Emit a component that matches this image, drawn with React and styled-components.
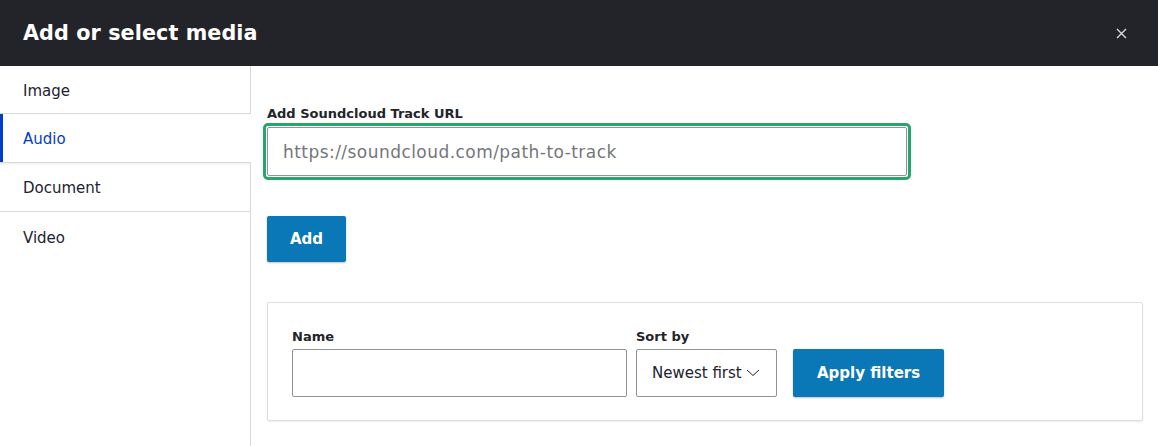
import React from "react";
import styled, { createGlobalStyle } from "styled-components";

const Global = createGlobalStyle`
  html, body { margin: 0; padding: 0; background: #fff; }
  body { font-family: "DejaVu Sans", "Liberation Sans", sans-serif; color: #222330; }
  * { box-sizing: border-box; }
`;

const Dialog = styled.div`
  width: 1158px;
  height: 446px;
  display: flex;
  flex-direction: column;
  overflow: hidden;
`;

const TitleBar = styled.header`
  height: 66px;
  flex: none;
  background: #232429;
  display: flex;
  align-items: center;
  justify-content: space-between;
  padding: 0 30px 0 23px;
`;

const Title = styled.h1`
  margin: 0;
  font-size: 20.7px;
  font-weight: 700;
  color: #fff;
  letter-spacing: 0.1px;
`;

const CloseButton = styled.button`
  border: 0;
  background: transparent;
  padding: 0;
  width: 14px;
  height: 14px;
  display: flex;
  align-items: center;
  justify-content: center;
  cursor: pointer;
`;

const Body = styled.div`
  flex: 1;
  display: flex;
  min-height: 0;
`;

const Sidebar = styled.nav`
  width: 251px;
  flex: none;
  display: flex;
  flex-direction: column;
  position: relative;
  &::after {
    content: "";
    position: absolute;
    top: 195px;
    bottom: 0;
    right: 0;
    width: 1px;
    background: #d8d9de;
  }
`;

const Tab = styled.a`
  height: ${(p) => (p.$first ? 48 : 49)}px;
  display: flex;
  align-items: center;
  padding: 2px 0 0 23px;
  font-size: 15px;
  text-decoration: none;
  color: ${(p) => (p.$active ? "#003ecc" : "#222330")};
  border-bottom: ${(p) => (p.$last ? "0" : "1px solid #d8d9de")};
  border-right: ${(p) => (p.$active ? "1px solid transparent" : "1px solid #d8d9de")};
  box-shadow: ${(p) => (p.$active ? "inset 3px 0 0 #003ecc, 0 2px 2px -1px rgba(0,0,0,0.08)" : "none")};
  position: relative;
  z-index: ${(p) => (p.$active ? 1 : 0)};
  background: #fff;
`;

const Content = styled.main`
  flex: 1;
  padding: 40px 15px 0 16px;
  display: flex;
  flex-direction: column;
`;

const Label = styled.label`
  display: block;
  font-size: 13px;
  font-weight: 700;
  color: #232429;
  margin-bottom: 2px;
`;

const UrlField = styled.div`
  width: 648px;
  margin-left: -4px;
  padding: 1px;
  border: 3px solid #26a769;
  border-radius: 5px;
`;

const TextInput = styled.input`
  display: block;
  width: ${(p) => p.$width || "100%"};
  height: ${(p) => p.$h || 48}px;
  border: 1px solid #8e929c;
  border-radius: 2px;
  padding: 0 15px;
  font-family: inherit;
  font-size: 17px;
  letter-spacing: 0.45px;
  color: #222330;
  background: #fff;
  outline: none;
  &::placeholder { color: #75767b; }
`;

const PrimaryButton = styled.button`
  height: ${(p) => p.$h || 46}px;
  padding: 0 ${(p) => p.$px || 23}px;
  border: 0;
  border-radius: 2px;
  background: #0a78b6;
  color: #fff;
  font-family: inherit;
  font-size: 15px;
  font-weight: 700;
  box-shadow: 0 1px 2px rgba(0, 0, 0, 0.25);
  cursor: pointer;
`;

const AddRow = styled.div`
  margin-top: 36px;
`;

const FilterCard = styled.section`
  margin-top: 40px;
  width: 876px;
  border: 1px solid #dedfe4;
  border-radius: 2px;
  box-shadow: 0 1px 2px rgba(0, 0, 0, 0.08);
  padding: 26px 24px 23px 24px;
  display: flex;
  align-items: flex-end;
  gap: 9px;
  align-self: flex-start;
`;

const FilterItem = styled.div`
  display: flex;
  flex-direction: column;
`;

const FilterLabel = styled(Label)`
  margin-bottom: 5px;
`;

const Select = styled.div`
  width: 141px;
  height: 48px;
  border: 1px solid #8e929c;
  border-radius: 2px;
  display: flex;
  align-items: center;
  padding-left: 15px;
  gap: 4px;
  font-size: 15px;
  color: #222330;
`;

const ButtonSlot = styled.div`
  margin-left: 7px;
`;

export default function App() {
  return (
    <>
      <Global />
      <Dialog>
        <TitleBar>
          <Title>Add or select media</Title>
          <CloseButton aria-label="Close">
            <svg width="11" height="11" viewBox="0 0 11 11">
              <path d="M1 1L10 10M10 1L1 10" stroke="#d8d9de" strokeWidth="1.4" fill="none" />
            </svg>
          </CloseButton>
        </TitleBar>
        <Body>
          <Sidebar>
            <Tab $first>Image</Tab>
            <Tab $active>Audio</Tab>
            <Tab>Document</Tab>
            <Tab $last>Video</Tab>
          </Sidebar>
          <Content>
            <Label>Add Soundcloud Track URL</Label>
            <UrlField>
              <TextInput $h={49} placeholder="https://soundcloud.com/path-to-track" />
            </UrlField>
            <AddRow>
              <PrimaryButton $px={23}>Add</PrimaryButton>
            </AddRow>
            <FilterCard>
              <FilterItem>
                <FilterLabel>Name</FilterLabel>
                <TextInput $width="335px" />
              </FilterItem>
              <FilterItem>
                <FilterLabel>Sort by</FilterLabel>
                <Select>
                  Newest first
                  <svg width="14" height="8" viewBox="0 0 14 8">
                    <path d="M1 1L7 6.5L13 1" stroke="#222330" strokeWidth="1" fill="none" />
                  </svg>
                </Select>
              </FilterItem>
              <ButtonSlot>
                <PrimaryButton $h={48} $px={24}>Apply filters</PrimaryButton>
              </ButtonSlot>
            </FilterCard>
          </Content>
        </Body>
      </Dialog>
    </>
  );
}
